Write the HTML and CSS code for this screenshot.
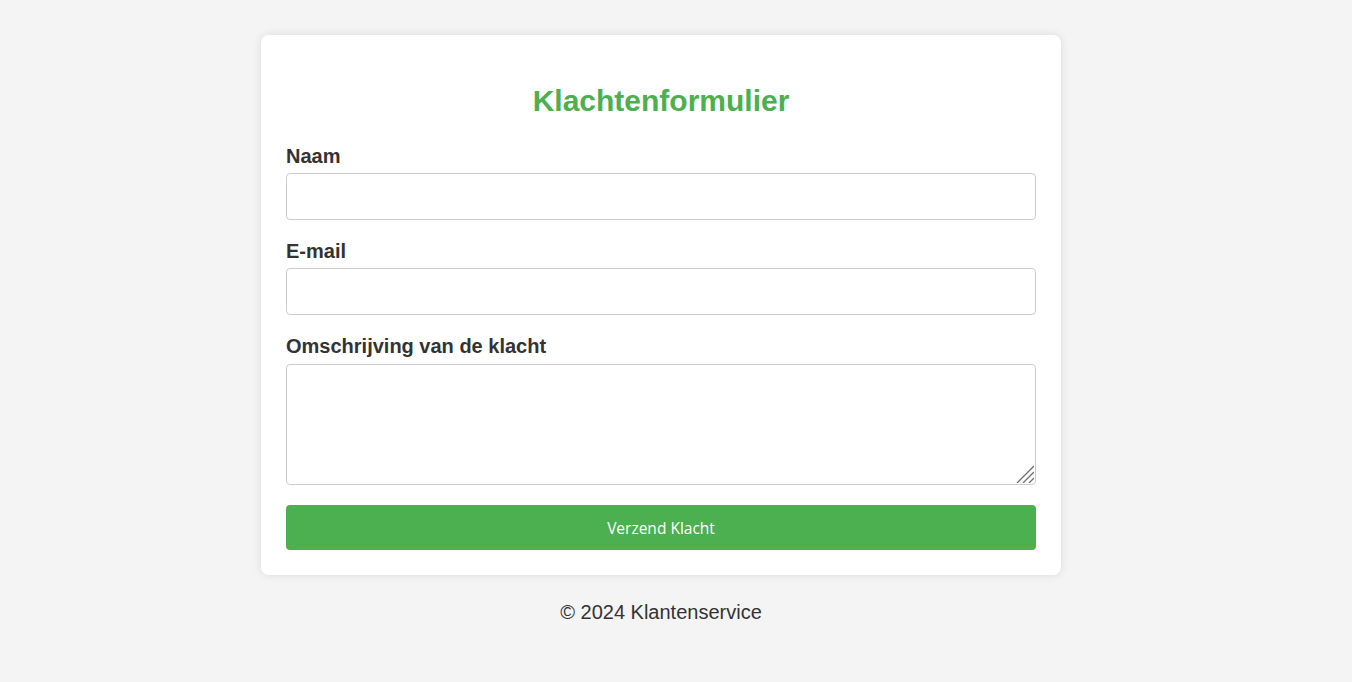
FILE: index.html
```html
<!DOCTYPE html>
<html lang="nl">
<head>
<meta charset="utf-8">
<title>Klachtenformulier</title>
<link rel="stylesheet" href="styles.css">
</head>
<body>
<main class="card">
  <h1 class="title">Klachtenformulier</h1>
  <form class="form">
    <label class="label" for="naam">Naam</label>
    <input class="field" id="naam" type="text">
    <label class="label" for="email">E-mail</label>
    <input class="field" id="email" type="email">
    <label class="label label-area" for="klacht">Omschrijving van de klacht</label>
    <div class="area-wrap">
      <textarea class="field area" id="klacht"></textarea>
      <svg class="grip" width="18" height="18" viewBox="0 0 18 18" aria-hidden="true">
        <path d="M1 18 L18 1 M7 18 L18 7 M13 18 L18 13" stroke="#6e6e6e" stroke-width="1.3" fill="none"/>
      </svg>
    </div>
    <button class="btn" type="button">Verzend Klacht</button>
  </form>
</main>
<footer class="footer">© 2024 Klantenservice</footer>
</body>
</html>
```
FILE: styles.css
```css
html, body { margin: 0; padding: 0; }
body {
  background: #f4f4f4;
  font-family: "Liberation Sans", Arial, sans-serif;
  color: #333;
  padding: 35px 30px 0 0;
}
.card {
  width: 750px;
  margin: 0 auto;
  background: #fff;
  padding: 25px;
  border-radius: 8px;
  box-shadow: 0 0 10px rgba(0,0,0,0.1);
}
.title {
  margin: 21px 0 0;
  text-align: center;
  color: #4caf50;
  font-size: 30px;
  line-height: 40px;
  font-weight: bold;
}
.form {
  display: flex;
  flex-direction: column;
  margin-top: 24px;
}
.label {
  font-weight: bold;
  font-size: 20px;
  line-height: 23px;
  margin-bottom: 5px;
}
.label-area { margin-bottom: 6px; }
.field {
  box-sizing: border-box;
  display: block;
  width: 100%;
  height: 47px;
  border: 1px solid #ccc;
  border-radius: 4px;
  margin: 0 0 20px;
  padding: 10px;
  font-size: 16px;
  font-family: inherit;
}
.area-wrap { position: relative; margin-bottom: 20px; }
.area { height: 121px; resize: none; margin: 0; }
.grip { position: absolute; right: 2px; bottom: 2px; }
.btn {
  height: 45px;
  background: #4caf50;
  color: #fff;
  border: none;
  border-radius: 4px;
  font-family: "Open Sans", sans-serif;
  font-size: 15.5px;
}
.footer {
  text-align: center;
  font-size: 20px;
  line-height: 23px;
  margin-top: 26px;
}
```
